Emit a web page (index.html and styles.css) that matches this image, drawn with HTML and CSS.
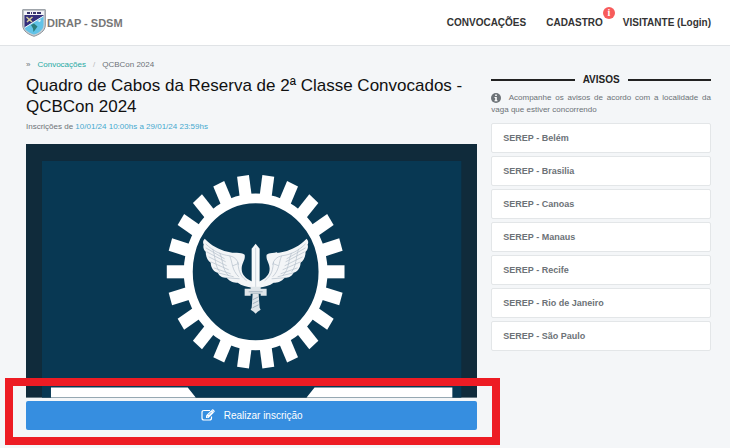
FILE: index.html
```html
<!DOCTYPE html>
<html lang="pt-BR">
<head>
  <meta charset="UTF-8">
  <meta name="viewport" content="width=device-width, initial-scale=1.0">
  <title>DIRAP - SDSM</title>
  <link rel="stylesheet" href="styles.css">
</head>
<body>
  <header class="topbar">
    <a class="brand" href="#">
      <svg class="brand-logo" viewBox="0 0 24 28" aria-hidden="true">
        <path d="M0.7 0.7H23.3V16C23.3 22.500 17 25.500 12 27.300C7 25.500 0.700 22.500 0.700 16Z" fill="#c9ced3" stroke="#8c9299" stroke-width="1"/>
        <path d="M2.500 2.500H21.500V7L2.500 18.500Z" fill="#332f7c"/>
        <path d="M21.500 7V16C21.500 21 16.500 24 12 25.600C7.500 24 3 21.500 2.600 18.500Z" fill="#62c3e8"/>
        <path d="M2 2H22V6H2Z" fill="#f1f2f6"/>
        <path d="M5 4H8M9 4H10M11 4H14M15 4H19" stroke="#39376e" stroke-width="2"/>
        <path d="M4.500 8L7.300 10.500L10.500 8M5 13L7.500 10.500L10 13" fill="none" stroke="#d7cf9d" stroke-width="1.500"/>
        <path d="M3 18.500L21.500 7" stroke="#eef4f8" stroke-width="1"/>
        <path d="M9 16L12 14.500L15.500 17.500L13 21L11.500 23L11 19.500Z" fill="#2b7d7c"/>
        <path d="M15 12L19 10.500L18 13Z" fill="#e8f4f8"/>
      </svg>
      <span>DIRAP - SDSM</span>
    </a>
    <nav class="menu">
      <a href="#">CONVOCAÇÕES</a>
      <a class="menu-cadastro" href="#">CADASTRO<span class="badge">i</span></a>
      <a href="#">VISITANTE (Login)</a>
    </nav>
  </header>

  <div class="page">
    <main class="content">
      <nav class="breadcrumb">
        <span class="arrow">»</span>
        <a href="#">Convocações</a>
        <span class="divider">/</span>
        <span>QCBCon 2024</span>
      </nav>
      <h1>Quadro de Cabos da Reserva de 2ª Classe Convocados - QCBCon 2024</h1>
      <p class="period">Inscrições de <span>10/01/24 10:00hs a 29/01/24 23:59hs</span></p>

      <svg class="banner" viewBox="0 0 452 254" role="img" aria-label="Força Aérea Brasileira">
        <defs>
          <g id="teeth">
            <rect x="69" y="-6" width="20" height="12"/>
            <rect x="69" y="-6" width="20" height="12" transform="rotate(16.364)"/>
            <rect x="69" y="-6" width="20" height="12" transform="rotate(32.727)"/>
            <rect x="69" y="-6" width="20" height="12" transform="rotate(49.091)"/>
            <rect x="69" y="-6" width="20" height="12" transform="rotate(65.455)"/>
            <rect x="69" y="-6" width="20" height="12" transform="rotate(81.818)"/>
            <rect x="69" y="-6" width="20" height="12" transform="rotate(98.182)"/>
            <rect x="69" y="-6" width="20" height="12" transform="rotate(114.545)"/>
            <rect x="69" y="-6" width="20" height="12" transform="rotate(130.909)"/>
            <rect x="69" y="-6" width="20" height="12" transform="rotate(147.273)"/>
            <rect x="69" y="-6" width="20" height="12" transform="rotate(163.636)"/>
          </g>
          <g id="wing">
            <path d="M3 10C10 7 14 3 14 -3C14 -9 10 -12 11 -17C15 -20 22 -18 28 -20C37 -22 44 -26 51 -33C53 -31 53 -29 52 -27C53 -25 52 -22 50 -20C50 -15 48 -11 45 -9C45 -4 42 0 38 1C36 5 33 6 29 6C26 10 22 11 18 11C14 14 9 15 3 16Z" fill="#f3f5f7"/>
            <path d="M50 -28C43 -21 35 -17 26 -16C21 -15 18 -12 17 -7M50 -24L31 -13M49 -20L30 -10M47 -15L29 -6M45 -10L27 -2M42 -4L25 2M38 1L22 5M29 6L16 7M26 -16C23 -9 24 -2 17 5M36 -19C32 -10 34 -3 27 4M43 -23C40 -14 41 -6 36 0M18 -10C17 -3 17 3 9 9M23 -6L18 -8" fill="none" stroke="#b4c0cb" stroke-width="0.700"/>
          </g>
        </defs>
        <rect width="452" height="254" fill="#102b3b"/>
        <rect x="16" y="17" width="420" height="237" fill="#083853"/>
        <g transform="translate(230 128) scale(1 1.090)" fill="#fff">
          <circle r="67.500" fill="none" stroke="#fff" stroke-width="9"/>
          <use href="#teeth"/>
          <use href="#teeth" transform="rotate(180)"/>
        </g>
        <g transform="translate(230 128)">
          <use href="#wing"/>
          <use href="#wing" transform="scale(-1 1)"/>
          <path d="M-4 17V-23L0 -28L4 -23V17Z" fill="#f7f9fa"/>
          <path d="M0 -24V16" stroke="#c5ced6" stroke-width="0.800"/>
          <path d="M-11 17H-5V15H5V17H11V24H5V22H-5V24H-11Z" fill="#dfe5e9"/>
          <path d="M-3 22H3L4 36L5 38L2 40L0 42L-2 40L-5 38L-4 36Z" fill="#dfe5e9"/>
          <path d="M-3 28L3 25M-3 32L3 29M-3 36L3 33M-7 20H7" stroke="#93a4b3" stroke-width="0.800"/>
        </g>
        <path d="M25 244H162L170 254H25ZM289 244H427V254H281Z" fill="#fff"/>
      </svg>

      <div class="action">
        <button class="btn-inscricao" type="button">
          <svg viewBox="0 0 14 12" aria-hidden="true">
            <path d="M9 1.500H3Q1 1.500 1 3.500V9Q1 11 3 11H8.500Q10.500 11 10.500 9V7.500" fill="none" stroke="currentColor" stroke-width="1.200"/>
            <path d="M5 6.500L10.500 1L13 3.500L7.500 9H5Z" fill="currentColor"/>
            <path d="M11 0.600Q11.700 0 12.400 0.600L13.500 1.700Q14 2.300 13.500 3L13.200 3.300L10.700 0.900Z" fill="currentColor"/>
            <path d="M6 7.900L6.900 7.900M7.500 6L10.500 3" stroke="#368ee0" stroke-width="0.700"/>
          </svg>
          Realizar inscrição
        </button>
        <div class="highlight"></div>
      </div>
    </main>

    <aside class="avisos">
      <h2>AVISOS</h2>
      <p>
        <svg class="info" viewBox="0 0 10 10" aria-hidden="true">
          <circle cx="5" cy="5" r="5" fill="#6c7277"/>
          <path d="M4.200 1.500H5.800V3H4.200ZM3.500 4H5.800V7.200H6.500V8.300H3.500V7.200H4.200V5.100H3.500Z" fill="#fff"/>
        </svg>
        Acompanhe os avisos de acordo com a localidade da vaga que estiver concorrendo
      </p>
      <ul>
        <li><a href="#">SEREP - Belém</a></li>
        <li><a href="#">SEREP - Brasilia</a></li>
        <li><a href="#">SEREP - Canoas</a></li>
        <li><a href="#">SEREP - Manaus</a></li>
        <li><a href="#">SEREP - Recife</a></li>
        <li><a href="#">SEREP - Rio de Janeiro</a></li>
        <li><a href="#">SEREP - São Paulo</a></li>
      </ul>
    </aside>
  </div>
</body>
</html>
```
FILE: styles.css
```css
* {
  box-sizing: border-box;
}

body {
  margin: 0;
  background: #f4f6f8;
  color: #6c7277;
  font-family: "Liberation Sans", Arial, sans-serif;
  font-size: 8px;
  line-height: 12px;
}

a {
  color: inherit;
  text-decoration: none;
}

/* Top bar */
.topbar {
  display: flex;
  justify-content: space-between;
  align-items: center;
  padding: 9px 19px 8px 22px;
  background: #fff;
  border-bottom: 1px solid #e0e3e6;
}

.brand {
  display: flex;
  align-items: center;
  gap: 1px;
  color: #777;
  font-size: 11px;
  font-weight: bold;
}

.brand-logo {
  width: 24px;
  height: 28px;
}

.menu {
  display: flex;
  gap: 20px;
  color: #333;
  font-size: 10px;
  font-weight: bold;
}

.menu-cadastro {
  position: relative;
}

.badge {
  position: absolute;
  top: -10px;
  right: -12px;
  width: 12px;
  height: 12px;
  border-radius: 50%;
  background: #f75b5b;
  color: #fff;
  font-family: "Liberation Serif", serif;
  text-align: center;
}

/* Page columns */
.page {
  display: grid;
  grid-template-columns: 452fr 220fr;
  gap: 14px;
  padding: 13px 19px 17px 26px;
}

.breadcrumb {
  display: flex;
  gap: 7px;
}

.breadcrumb a {
  color: #27a9a3;
}

.divider {
  color: #bbb;
}

h1 {
  margin: 4px 0;
  color: #111;
  font-size: 17px;
  font-weight: normal;
  line-height: 21px;
}

.period {
  margin: 0 0 11px;
}

.period span {
  color: #45a9cf;
}

.banner {
  display: block;
  width: 100%;
}

.action {
  position: relative;
  margin-top: 3px;
}

.btn-inscricao {
  display: flex;
  justify-content: center;
  align-items: center;
  gap: 9px;
  width: 100%;
  height: 29px;
  border: 0;
  border-radius: 2px;
  background: #368ee0;
  color: #fff;
  font-family: inherit;
  font-size: 10px;
  cursor: pointer;
}

.btn-inscricao svg {
  width: 14px;
  height: 12px;
}

/* Red frame around the button */
.highlight {
  position: absolute;
  top: -23px;
  right: -23px;
  bottom: -15px;
  left: -21px;
  border: 8px solid #ed1c24;
  pointer-events: none;
}

/* Notices */
.avisos {
  padding-top: 15px;
}

.avisos h2 {
  display: flex;
  align-items: center;
  gap: 8px;
  margin: 0 0 6px;
  color: #222;
  font-size: 10px;
  line-height: 12px;
}

.avisos h2::before,
.avisos h2::after {
  content: "";
  flex: 1;
  height: 2px;
  background: #222;
}

.avisos p {
  margin: 0 0 7px;
  text-align: justify;
}

.info {
  width: 10px;
  height: 10px;
  margin-right: 4px;
  vertical-align: middle;
}

.avisos ul {
  display: grid;
  gap: 3px;
  margin: 0;
  padding: 0;
  list-style: none;
}

.avisos li a {
  display: block;
  padding: 8px 11px;
  border: 1px solid #e3e6e8;
  border-radius: 2px;
  background: #fff;
  font-size: 9px;
  font-weight: bold;
}
```
